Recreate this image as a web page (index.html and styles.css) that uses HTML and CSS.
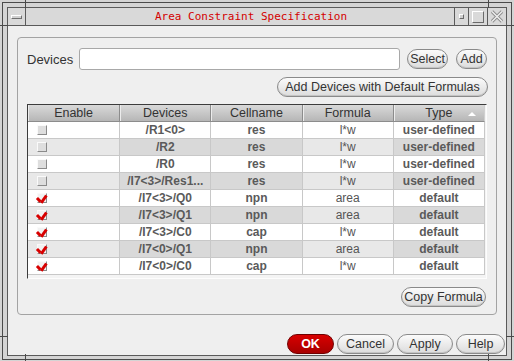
FILE: index.html
```html
<!DOCTYPE html>
<html lang="en">
<head>
    <meta charset="UTF-8">
    <meta name="viewport" content="width=device-width, initial-scale=1.0">
    <title>Area Constraint Specification</title>
    <link rel="stylesheet" href="styles.css">
</head>
<body>
    <div class="window">
        <div class="frame">
            <span class="tick tick-top-left"></span>
            <span class="tick tick-top-right"></span>
            <span class="tick tick-left-top"></span>
            <span class="tick tick-right-top"></span>
            <span class="tick tick-bottom-left"></span>
            <span class="tick tick-bottom-right"></span>
            <span class="tick tick-left-bottom"></span>
            <span class="tick tick-right-bottom"></span>
            <div class="inner">
                <div class="titlebar">
                    <div class="tb-menu"><span class="menu-bar"></span></div>
                    <div class="tb-title">Area Constraint Specification</div>
                    <div class="tb-btn tb-min"><span class="min-dot"></span></div>
                    <div class="tb-btn tb-max"><span class="max-box"></span></div>
                    <div class="tb-btn tb-close">
                        <svg width="14" height="13" viewBox="0 0 14 13">
                            <path d="M2 1.5 L12 11.5 M12 1.5 L2 11.5" stroke="#8c8c8c" stroke-width="3.2" fill="none"/>
                            <path d="M2 1.5 L12 11.5 M12 1.5 L2 11.5" stroke="#efefef" stroke-width="1.4" fill="none"/>
                        </svg>
                    </div>
                </div>

                <div class="content">
                    <div class="group">
                        <div class="device-row">
                            <label class="device-label" for="devices">Devices</label>
                            <input class="device-input" id="devices" type="text">
                            <button class="btn btn-select">Select</button>
                            <button class="btn btn-add">Add</button>
                        </div>
                        <div class="defaults-row">
                            <button class="btn btn-defaults">Add Devices with Default Formulas</button>
                        </div>

                        <div class="table-wrap">
                            <table class="grid">
                                <colgroup>
                                    <col class="c-enable"><col class="c-dev"><col class="c-cell"><col class="c-form"><col class="c-type">
                                </colgroup>
                                <thead>
                                    <tr>
                                        <th>Enable</th>
                                        <th>Devices</th>
                                        <th>Cellname</th>
                                        <th>Formula</th>
                                        <th class="sorted">Type <span class="sort-arrow"></span></th>
                                    </tr>
                                </thead>
                                <tbody>
                                    <tr>
                                        <td class="enable"><span class="box"></span></td>
                                        <td class="bold">/R1&lt;0&gt;</td><td class="bold">res</td><td>l*w</td><td class="bold">user-defined</td>
                                    </tr>
                                    <tr>
                                        <td class="enable"><span class="box"></span></td>
                                        <td class="bold">/R2</td><td class="bold">res</td><td>l*w</td><td class="bold">user-defined</td>
                                    </tr>
                                    <tr>
                                        <td class="enable"><span class="box"></span></td>
                                        <td class="bold">/R0</td><td class="bold">res</td><td>l*w</td><td class="bold">user-defined</td>
                                    </tr>
                                    <tr>
                                        <td class="enable"><span class="box"></span></td>
                                        <td class="bold">/I7&lt;3&gt;/Res1...</td><td class="bold">res</td><td>l*w</td><td class="bold">user-defined</td>
                                    </tr>
                                    <tr>
                                        <td class="enable"><span class="box checked"></span></td>
                                        <td class="bold">/I7&lt;3&gt;/Q0</td><td class="bold">npn</td><td>area</td><td class="bold">default</td>
                                    </tr>
                                    <tr>
                                        <td class="enable"><span class="box checked"></span></td>
                                        <td class="bold">/I7&lt;3&gt;/Q1</td><td class="bold">npn</td><td>area</td><td class="bold">default</td>
                                    </tr>
                                    <tr>
                                        <td class="enable"><span class="box checked"></span></td>
                                        <td class="bold">/I7&lt;3&gt;/C0</td><td class="bold">cap</td><td>l*w</td><td class="bold">default</td>
                                    </tr>
                                    <tr>
                                        <td class="enable"><span class="box checked"></span></td>
                                        <td class="bold">/I7&lt;0&gt;/Q1</td><td class="bold">npn</td><td>area</td><td class="bold">default</td>
                                    </tr>
                                    <tr>
                                        <td class="enable"><span class="box checked"></span></td>
                                        <td class="bold">/I7&lt;0&gt;/C0</td><td class="bold">cap</td><td>l*w</td><td class="bold">default</td>
                                    </tr>
                                </tbody>
                            </table>
                        </div>

                        <div class="copy-row">
                            <button class="btn btn-copy">Copy Formula</button>
                        </div>
                    </div>

                    <div class="dialog-buttons">
                        <button class="btn btn-ok">OK</button>
                        <button class="btn btn-cancel">Cancel</button>
                        <button class="btn btn-apply">Apply</button>
                        <button class="btn btn-help">Help</button>
                    </div>
                </div>
            </div>
        </div>
    </div>
</body>
</html>
```

FILE: styles.css
```css
body {
    margin: 0;
    font-family: "Liberation Sans", "DejaVu Sans", sans-serif;
    font-size: 12px;
    color: #333;
    background-color: #d4d4d4;
}

.window {
    width: 514px;
    height: 361px;
    box-sizing: border-box;
    padding: 2px 2px 1px 2px;
    background-color: #d4d4d4;
}

.frame {
    position: relative;
    height: 100%;
    box-sizing: border-box;
    border: 1px solid #4a4a4a;
    padding: 4px 4px 3px 4px;
}

/* resize corner marks that cross the frame */
.tick {
    position: absolute;
    background-color: #4a4a4a;
}
.tick-top-left, .tick-top-right { top: -3px; width: 1px; height: 8px; }
.tick-bottom-left, .tick-bottom-right { bottom: -2px; width: 1px; height: 7px; }
.tick-top-left, .tick-bottom-left { left: 22px; }
.tick-top-right, .tick-bottom-right { right: 22px; }
.tick-left-top, .tick-right-top { top: 22px; height: 1px; width: 8px; }
.tick-left-bottom, .tick-right-bottom { bottom: 22px; height: 1px; width: 8px; }
.tick-left-top, .tick-left-bottom { left: -3px; }
.tick-right-top, .tick-right-bottom { right: -3px; }

.inner {
    height: 100%;
    box-sizing: border-box;
    border: 1px solid #5a5a5a;
    display: flex;
    flex-direction: column;
    background-color: #efefef;
}

/* title bar */
.titlebar {
    display: flex;
    height: 17px;
    border-bottom: 1px solid #5a5a5a;
    background-color: #d9d9d9;
}

.tb-menu {
    width: 17px;
    border-right: 1px solid #5a5a5a;
    display: flex;
    align-items: center;
    justify-content: center;
}

.menu-bar {
    width: 9px;
    height: 2px;
    background-color: #d0d0d0;
    border-top: 1px solid #fff;
    border-left: 1px solid #fff;
    border-bottom: 1px solid #707070;
    border-right: 1px solid #707070;
    margin-right: 1px;
}

.tb-title {
    flex: 1;
    text-align: center;
    padding-left: 22px;
    font-family: "DejaVu Sans Mono", "Liberation Mono", monospace;
    font-size: 11px;
    line-height: 17px;
    color: #d40000;
}

.tb-btn {
    border-left: 1px solid #5a5a5a;
    display: flex;
    align-items: center;
    justify-content: center;
}
.tb-min { width: 13px; }
.tb-max { width: 18px; }
.tb-close { width: 18px; }

.min-dot {
    width: 3px;
    height: 3px;
    background-color: #cfcfcf;
    border-top: 1px solid #fff;
    border-left: 1px solid #fff;
    border-bottom: 1px solid #6a6a6a;
    border-right: 1px solid #6a6a6a;
    margin-bottom: 1px;
}

.max-box {
    width: 10px;
    height: 10px;
    border-top: 1px solid #fff;
    border-left: 1px solid #fff;
    border-bottom: 1px solid #6a6a6a;
    border-right: 1px solid #6a6a6a;
}

/* dialog body */
.content {
    flex: 1;
    display: flex;
    flex-direction: column;
}

.group {
    margin: 11px 9px 0 9px;
    padding: 10px 9px 7px 9px;
    border: 1px solid #a3a3a3;
    border-radius: 4px;
}

.device-row {
    display: flex;
    align-items: center;
    height: 22px;
}

.device-label {
    width: 52px;
    font-size: 13px;
    color: #333;
}

.device-input {
    flex: 1;
    height: 22px;
    box-sizing: border-box;
    margin: 0 7px 0 0;
    border: 1px solid #a8a8a8;
    border-radius: 3px;
    background-color: #fff;
}

.btn {
    font-family: "Liberation Sans", "DejaVu Sans", sans-serif;
    font-size: 12.5px;
    color: #333;
    height: 20px;
    padding: 0;
    box-sizing: border-box;
    border: 1px solid #8a8a8a;
    border-radius: 10px;
    background: linear-gradient(#fbfbfb, #dcdcdc);
    box-shadow: inset 0 -1px 0 #c4c4c4;
}

.btn-select { width: 41px; margin-right: 8px; }
.btn-add { width: 31px; }

.defaults-row {
    display: flex;
    justify-content: flex-end;
    margin-top: 7px;
}
.btn-defaults { width: 211px; margin-right: -1px; }

/* device table */
.table-wrap {
    margin-top: 7px;
    height: 175px;
    box-sizing: border-box;
    border-top: 1px solid #3c3c3c;
    border-left: 1px solid #3c3c3c;
    border-right: 1px solid #fdfdfd;
    border-bottom: 1px solid #fdfdfd;
    background-color: #f4f4f4;
    overflow: hidden;
}

.grid {
    width: 457px;
    table-layout: fixed;
    border-collapse: separate;
    border-spacing: 0;
}

.c-enable { width: 92px; }
.c-dev, .c-cell, .c-form, .c-type { width: 91px; }

.grid th {
    height: 16px;
    padding: 0;
    font-weight: normal;
    font-size: 12.5px;
    color: #333;
    background: linear-gradient(#d9d9d9, #b6b6b6);
    border-right: 1px solid #8c8c8c;
    border-bottom: 1px solid #8c8c8c;
    box-shadow: inset 1px 0 0 #ececec;
    line-height: 16px;
}
.grid th:last-child { border-right: 1px solid #d0d0d0; }

.sorted { position: relative; }

.sort-arrow {
    position: absolute;
    right: 8px;
    top: 7px;
    width: 0;
    height: 0;
    border-left: 4px solid transparent;
    border-right: 4px solid transparent;
    border-bottom: 4px solid #fff;
}

.grid td {
    height: 16px;
    padding: 0;
    text-align: center;
    line-height: 16px;
    white-space: nowrap;
    overflow: hidden;
    color: #555;
    border-right: 1px solid #c8c8c8;
    border-bottom: 1px solid #c8c8c8;
    background-color: #fff;
}

.grid td.bold {
    font-weight: bold;
    color: #5a5a5a;
}

.grid tbody tr:nth-child(even) td { background-color: #e8e8e8; }
.grid tbody tr:nth-child(even) td.bold { background-color: #d9d9d9; }

.grid td.enable {
    text-align: left;
}

.box {
    display: inline-block;
    vertical-align: middle;
    margin: -2px 0 0 9px;
    width: 8px;
    height: 8px;
    border-top: 1px solid #fafafa;
    border-left: 1px solid #fafafa;
    border-right: 1px solid #8a8a8a;
    border-bottom: 1px solid #8a8a8a;
    background-color: #dedede;
    position: relative;
}

.box.checked {
    background-color: #f2f2f2;
}

/* red tick drawn with two bars */
.box.checked::before,
.box.checked::after {
    content: "";
    position: absolute;
    background-color: #d80000;
}
.box.checked::before {
    left: 0;
    top: 3px;
    width: 5px;
    height: 3px;
    transform: rotate(45deg);
    transform-origin: left top;
}
.box.checked::after {
    left: 2px;
    top: 3px;
    width: 9px;
    height: 3px;
    transform: rotate(-55deg);
    transform-origin: left top;
    top: 8px;
}

.copy-row {
    display: flex;
    justify-content: flex-end;
    margin-top: 8px;
}
.btn-copy { width: 85px; margin-right: 1px; }

/* bottom buttons */
.dialog-buttons {
    display: flex;
    justify-content: flex-end;
    gap: 3px;
    margin-top: 19px;
    padding-right: 1px;
}

.btn-ok {
    width: 47px;
    color: #fff;
    font-weight: bold;
    border-color: #700000;
    background: linear-gradient(#d80000, #a80000);
    box-shadow: none;
}
.btn-cancel { width: 57px; }
.btn-apply { width: 56px; }
.btn-help { width: 49px; }
```
